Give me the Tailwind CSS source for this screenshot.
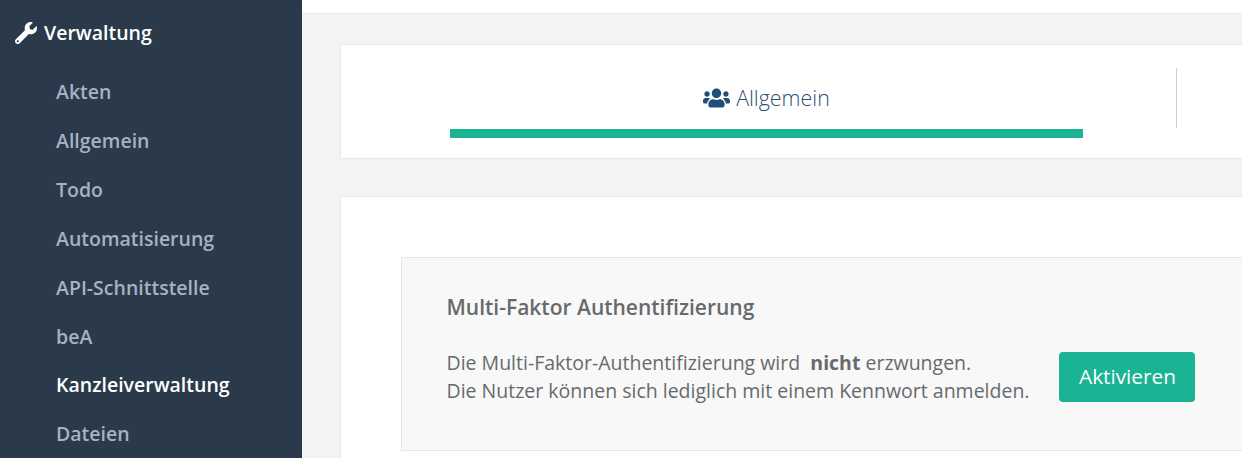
<!DOCTYPE html>
<html lang="de">
<head>
  <meta charset="UTF-8" />
  <title>Verwaltung</title>
  <script src="https://cdn.jsdelivr.net/npm/@tailwindcss/browser@4"></script>
</head>
<body class="font-['Open_Sans',sans-serif]">
  <div class="flex h-[458px] w-[1242px] overflow-hidden bg-[#f3f3f3]">

    <!-- Sidebar -->
    <aside class="w-[302px] shrink-0 bg-[#2a3a4a] text-[19.5px] leading-[26.92px] font-semibold">
      <div class="flex items-center gap-[7px] pl-[15px] pt-[20px] text-white">
        <svg class="h-[22px] w-[22px]" viewBox="0 0 512 512" fill="currentColor"><path d="M507.73 109.1c-2.24-9.03-13.54-12.09-20.12-5.51l-74.36 74.36-67.88-11.31-11.31-67.88 74.36-74.36c6.62-6.62 3.43-17.9-5.66-20.16-47.38-11.74-99.55.91-136.58 37.93-39.64 39.64-50.55 97.1-34.05 147.2L18.74 402.76c-24.99 24.99-24.99 65.51 0 90.5 24.99 24.99 65.51 24.99 90.5 0l213.21-213.21c50.12 16.71 107.47 5.68 147.37-34.22 37.07-37.07 49.7-89.32 37.91-136.73zM64 472c-13.25 0-24-10.75-24-24 0-13.26 10.75-24 24-24s24 10.74 24 24c0 13.25-10.75 24-24 24z"/></svg>
        <span>Verwaltung</span>
      </div>
      <nav class="mt-[32px] flex flex-col gap-[22px] pl-[56px] text-[#a7b1c2]">
        <a>Akten</a>
        <a>Allgemein</a>
        <a>Todo</a>
        <a>Automatisierung</a>
        <a>API-Schnittstelle</a>
        <a>beA</a>
        <a class="text-white">Kanzleiverwaltung</a>
        <a>Dateien</a>
      </nav>
    </aside>

    <!-- Main -->
    <main class="min-w-0 flex-1">
      <div class="h-[14px] border-b border-[#e7e7e7] bg-white"></div>

      <!-- Tabs -->
      <div class="ml-[38px] mt-[30px] flex h-[115px] w-[1000px] border border-[#e7eaec] bg-white">
        <div class="flex h-[113px] w-[835px] flex-col items-center pl-[16px] pt-[36px]">
          <div class="flex items-center gap-[6px] text-[21.45px] leading-[34px] font-light text-[#2f4f6f]">
            <svg class="h-[22px] w-[27px] text-[#1f4e79]" viewBox="0 0 640 512" fill="currentColor"><path d="M96 224c35.3 0 64-28.7 64-64s-28.7-64-64-64-64 28.7-64 64 28.7 64 64 64zm448 0c35.3 0 64-28.7 64-64s-28.7-64-64-64-64 28.7-64 64 28.7 64 64 64zm32 32h-64c-17.6 0-33.5 7.1-45.1 18.6 40.3 22.1 68.9 62 75.1 109.4h66c17.7 0 32-14.3 32-32v-32c0-35.3-28.7-64-64-64zm-256 0c61.9 0 112-50.1 112-112S381.9 32 320 32 208 82.1 208 144s50.1 112 112 112zm76.8 32h-8.3c-20.8 10-43.9 16-68.5 16s-47.6-6-68.5-16h-8.3C179.6 288 128 339.6 128 403.2V432c0 26.5 21.5 48 48 48h288c26.5 0 48-21.5 48-48v-28.8c0-63.6-51.6-115.2-115.2-115.2zm-223.7-13.4C161.5 263.1 145.6 256 128 256H64c-35.3 0-64 28.7-64 64v32c0 17.7 14.3 32 32 32h65.9c6.3-47.4 34.9-87.3 75.2-109.4z"/></svg>
            <span>Allgemein</span>
          </div>
          <div class="mt-[14px] h-[9px] w-[633px] bg-[#1ab394]"></div>
        </div>
        <div class="mt-[23px] h-[60px] w-px bg-[#cfcfcf]"></div>
      </div>

      <!-- Content card -->
      <div class="ml-[38px] mt-[37px] h-[400px] w-[1000px] border border-[#e7eaec] bg-white pl-[60px] pt-[60px]">
        <div class="h-[194px] w-[900px] border border-[#e7e7e7] bg-[#f8f8f8] pl-[44.5px] pt-[36px] text-[#676a6c]">
          <h2 class="text-[21px] leading-[27px] font-semibold">Multi-Faktor Authentifizierung</h2>
          <div class="mt-[28px] flex items-center gap-[30px]">
            <p class="text-[19.5px] leading-[28px]">
              Die Multi-Faktor-Authentifizierung wird &nbsp;<b class="font-bold">nicht</b> erzwungen.<br />
              Die Nutzer können sich lediglich mit einem Kennwort anmelden.
            </p>
            <button class="h-[50px] w-[136px] rounded-[4px] bg-[#1ab394] text-[20.8px] text-white">Aktivieren</button>
          </div>
        </div>
      </div>
    </main>
  </div>
</body>
</html>
